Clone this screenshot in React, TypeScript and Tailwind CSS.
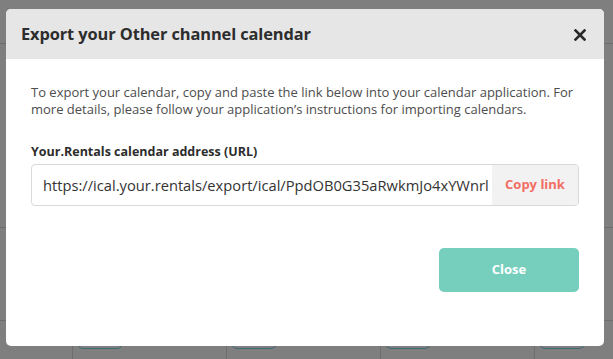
import React from "react";

const cols = [0, 1, 2, 3];

const Background = () => (
  <div className="absolute inset-0 bg-[#7f7f7f]">
    <div className="h-[44px] border-b border-[#6e6e6e]" />
    <div className="h-[184px] border-b border-[#6e6e6e]" />
    <div className="flex h-[93px] border-b border-[#6e6e6e]">
      <div className="w-[73px] shrink-0 border-r border-[#6e6e6e]" />
      {cols.map((c) => (
        <div key={c} className="w-[154px] shrink-0 border-r border-[#6e6e6e]" />
      ))}
    </div>
    <div className="flex">
      <div className="w-[73px] shrink-0 border-r border-[#6e6e6e] h-[40px]" />
      {cols.map((c) => (
        <div key={c} className="w-[154px] shrink-0 border-r border-[#6e6e6e] h-[40px] pl-[5px]">
          <div className="w-[44px] h-[29px] -mt-[1px] rounded-b-[5px] border border-t-0 border-[#3d6b75]" />
        </div>
      ))}
    </div>
  </div>
);

export default function App() {
  return (
    <div className="relative w-[613px] h-[359px] overflow-hidden" style={{ fontFamily: "'Open Sans', sans-serif" }}>
      <Background />
      <div className="absolute left-[6px] top-[9px] w-[598px] h-[337px] bg-white rounded-[5px] overflow-hidden">
        <div className="h-[50px] bg-[#e6e6e6] flex items-center justify-between pl-[15px] pr-[18px]">
          <h2 className="text-[16.4px] font-bold tracking-[-0.1px] text-[#2d2d2d]">Export your Other channel calendar</h2>
          <svg width="12" height="12" viewBox="0 0 12 12" className="mt-[2px]">
            <path d="M1.5 1.5 L10.5 10.5 M10.5 1.5 L1.5 10.5" stroke="#2a2a2a" strokeWidth="2.6" strokeLinecap="square" />
          </svg>
        </div>
        <div className="px-[25px] pt-[25px]">
          <p className="text-[13px] leading-[17px] text-[#4d4d4d]">
            To export your calendar, copy and paste the link below into your calendar application. For more
            details, please follow your application’s instructions for importing calendars.
          </p>
          <div className="mt-[25px] text-[12.5px] leading-[17px] font-bold text-[#2d2d2d]">
            Your.Rentals calendar address (URL)
          </div>
          <div className="mt-[4px] h-[42px] flex border border-[#d9d9d9] rounded-[4px] overflow-hidden">
            <div className="flex-1 min-w-0 flex items-center pl-[11px] text-[14.7px] text-[#333] overflow-hidden whitespace-nowrap">
              https://ical.your.rentals/export/ical/PpdOB0G35aRwkmJo4xYWnrl
            </div>
            <button className="w-[86px] shrink-0 bg-[#f2f2f2] text-[13px] font-bold text-[#f26d63]">Copy link</button>
          </div>
          <div className="mt-[42px] flex justify-end">
            <button className="w-[140px] h-[44px] rounded-[5px] bg-[#76cfbd] text-white text-[13px] font-bold">
              Close
            </button>
          </div>
        </div>
      </div>
    </div>
  );
}
